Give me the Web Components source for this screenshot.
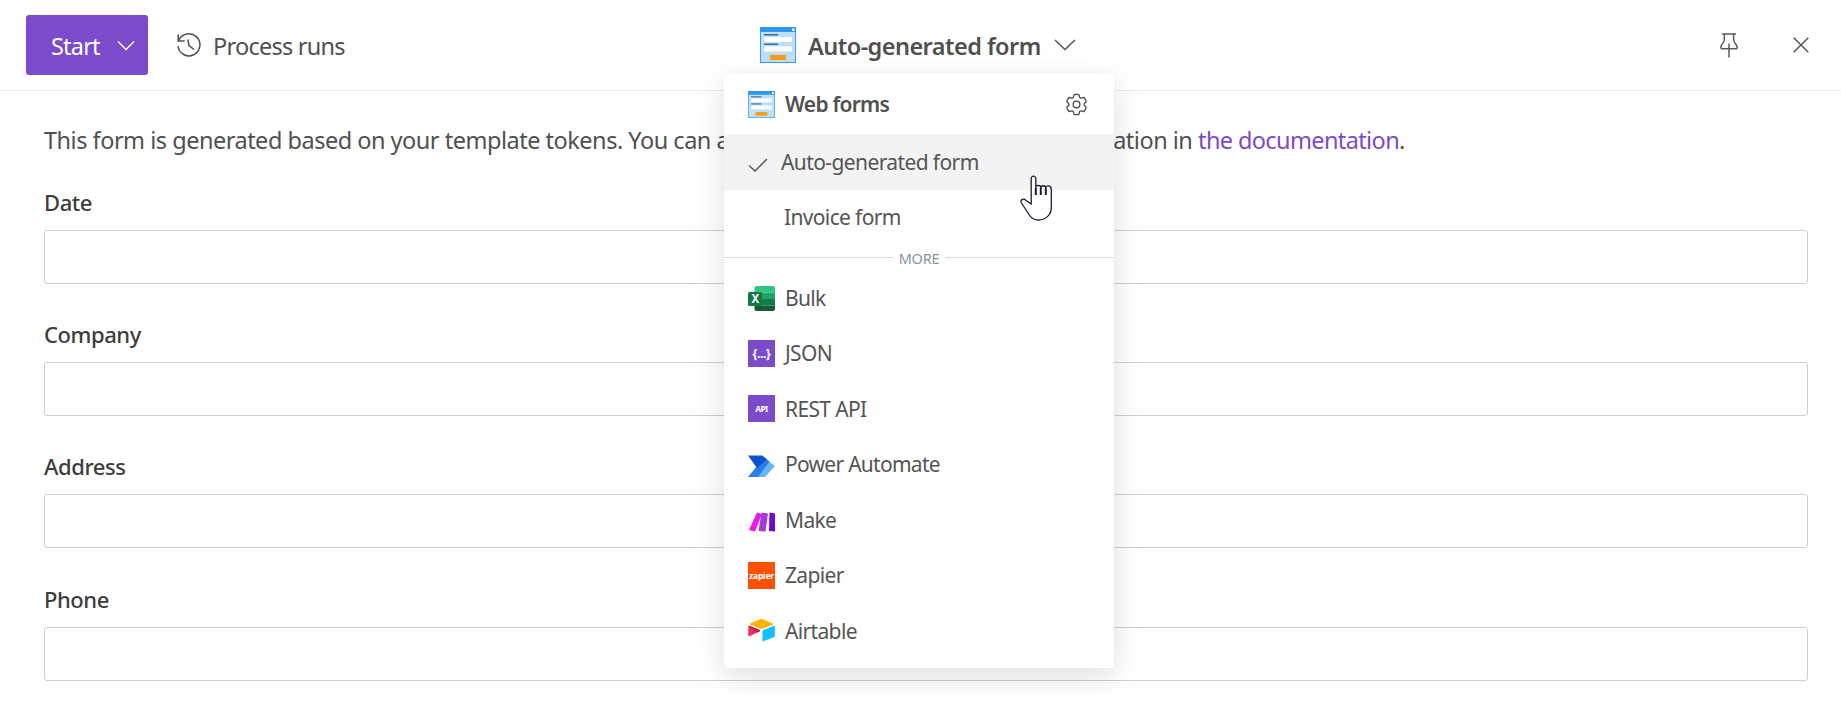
<!DOCTYPE html>
<html><head><meta charset="utf-8"><title>Form</title>
<style>
html,body{margin:0;background:#fff;height:100%;overflow:hidden}
body{font-family:"Noto Sans","Open Sans",sans-serif;color:#505050}
</style></head><body>
<flow-page>
  <top-bar slot="top"></top-bar>
  <form-intro></form-intro>
  <form-field label="Date"></form-field>
  <form-field label="Company"></form-field>
  <form-field label="Address"></form-field>
  <form-field label="Phone"></form-field>
</flow-page>
<script>
const ICONS={
 form:`<svg viewBox="0 0 36 36" width="100%" height="100%"><rect x="0.5" y="0.5" width="35" height="35" fill="#bfe0fb" stroke="#3f9df0"/><rect x="0" y="0" width="36" height="5" fill="#2f97ee"/><rect x="32" y="1.5" width="2.5" height="2.5" fill="#fff"/><rect x="4" y="7" width="14" height="1.5" fill="#3a6d96"/><rect x="4" y="10" width="28" height="5" fill="#fff"/><rect x="4" y="16.500" width="14" height="1.5" fill="#3a6d96"/><rect x="4" y="19.500" width="28" height="5" fill="#fff"/><rect x="10" y="28" width="16" height="5" fill="#f99d1c"/></svg>`,
 excel:`<svg viewBox="0 0 27 27" width="100%" height="100%" style="overflow:visible"><path d="M8.500 2h16.500a2 2 0 0 1 2 2V8.500H6.500V4a2 2 0 0 1 2-2z" fill="#33c481"/><rect x="6.500" y="8.500" width="20.500" height="6.500" fill="#21a366"/><rect x="6.500" y="15" width="20.500" height="6.500" fill="#107c41"/><path d="M6.500 21.500H27V25a2 2 0 0 1-2 2H8.500a2 2 0 0 1-2-2z" fill="#185c37"/><rect x="0" y="8" width="14" height="14" rx="1.500" fill="#0f7b40"/><text x="7" y="19.300" font-family="Noto Sans,sans-serif" font-size="11.500" font-weight="700" fill="#fff" text-anchor="middle">X</text></svg>`,
 pa:`<svg viewBox="0 0 27 27" width="100%" height="100%" style="overflow:visible"><path d="M18 8 27 15 17 26H8z" fill="#66b5ff"/><path d="M14 4.500 21.500 10.500 10 26H0L9 15z" fill="#2a7ee8"/><path d="M0 4.500H14L19 8.500 9 17z" fill="#0b53ce"/></svg>`,
 make:`<svg viewBox="0 0 27 27" width="100%" height="100%"><defs><linearGradient id="mk1" x1="0" y1="1" x2="1" y2="0"><stop offset="0" stop-color="#ff12f0"/><stop offset="1" stop-color="#d81eea"/></linearGradient></defs><path d="M1 24 9 6.500l5 1.500L7 25.500z" fill="url(#mk1)"/><path d="M13.500 6.500 20 7.500 17.500 25.500 10.500 25z" fill="#a63bd2"/><path d="M21.500 6.500 27 7.500V25.500L21 25z" fill="#7008d0"/></svg>`,
 airtable:`<svg viewBox="0 0 200 170" width="100%" height="100%"><path d="M90 2.300 16.600 32.700c-4.100 1.700-4 7.500.1 9.200L90.400 71.100c6.500 2.600 13.700 2.600 20.200 0l73.700-29.200c4.100-1.600 4.100-7.500.1-9.200L110.900 2.300C104.200-.5 96.700-.5 90 2.300z" fill="#ffb400"/><path d="M107 87v73c0 3.500 3.500 5.900 6.800 4.600l82.100-31.900c1.900-.7 3.100-2.600 3.100-4.600V55.100c0-3.500-3.500-5.900-6.800-4.600L110.100 82.400c-1.900.8-3.100 2.600-3.100 4.600z" fill="#18bfff"/><path d="M88 90.700 63.600 102.500l-2.500 1.200L9.600 128.400c-3.300 1.600-7.500-.8-7.500-4.500V55.400c0-1.300.7-2.500 1.600-3.400.4-.4.8-.7 1.200-.9 1.200-.7 3-1 4.500-.4l78.100 30.900c4 1.600 4.300 7.100.5 8.700z" fill="#f82b60"/><path d="M88 90.700 63.600 102.500 3.700 52c.4-.4.8-.7 1.200-.9 1.200-.7 3-1 4.500-.4l78.100 30.900c4 1.600 4.300 7.100.5 8.700z" fill="#b3265a"/></svg>`,
 gear:`<svg viewBox="0 0 24 24" width="100%" height="100%" fill="none" stroke="#484848" stroke-width="1.150"><path d="M9.594 3.940c.09-.542.56-.94 1.110-.94h2.593c.55 0 1.020.398 1.110.94l.213 1.281c.063.374.313.686.645.87.074.04.147.083.22.127.325.196.72.257 1.075.124l1.217-.456a1.125 1.125 0 0 1 1.370.49l1.296 2.247a1.125 1.125 0 0 1-.26 1.431l-1.003.827c-.293.241-.438.613-.43.992a7.723 7.723 0 0 1 0 .255c-.008.378.137.75.43.991l1.004.827c.424.35.534.955.26 1.430l-1.298 2.247a1.125 1.125 0 0 1-1.369.491l-1.217-.456c-.355-.133-.75-.072-1.076.124a6.470 6.470 0 0 1-.22.128c-.331.183-.581.495-.644.869l-.213 1.281c-.09.543-.56.94-1.110.94h-2.594c-.55 0-1.019-.398-1.110-.94l-.213-1.281c-.062-.374-.312-.686-.644-.87a6.520 6.520 0 0 1-.22-.127c-.325-.196-.72-.257-1.076-.124l-1.217.456a1.125 1.125 0 0 1-1.369-.49l-1.297-2.247a1.125 1.125 0 0 1 .26-1.431l1.004-.827c.292-.24.437-.613.43-.991a6.932 6.932 0 0 1 0-.255c.007-.38-.138-.751-.43-.992l-1.004-.827a1.125 1.125 0 0 1-.26-1.430l1.297-2.247a1.125 1.125 0 0 1 1.370-.491l1.216.456c.356.133.751.072 1.076-.124.072-.044.146-.086.22-.128.332-.183.582-.495.644-.869l.214-1.280Z"/><circle cx="12" cy="12" r="3"/></svg>`
};
const sq=(t,bg,fs,extra='')=>`<div style="width:100%;height:100%;background:${bg};color:#fff;display:flex;align-items:center;justify-content:center;font:700 ${fs}px 'Noto Sans',sans-serif;${extra}">${t}</div>`;
ICONS.json=sq('{...}','#7b4bcb',12,'letter-spacing:-.3px;');
ICONS.api=sq('API','#7b4bcb',8.5);
ICONS.zapier=sq('zapier','#ff4f00',8.5,'letter-spacing:-.2px;');

class BrandIcon extends HTMLElement{
  constructor(){super();this.attachShadow({mode:'open'})}
  connectedCallback(){
    const s=this.getAttribute('size')||27;
    this.shadowRoot.innerHTML=`<style>:host{display:block;width:${s}px;height:${s}px;flex:none}</style>${ICONS[this.getAttribute('name')]||''}`;
  }
}
customElements.define('brand-icon',BrandIcon);

class FlowPage extends HTMLElement{
  constructor(){super();this.attachShadow({mode:'open'}).innerHTML=`<style>
  :host{display:block}
  main{display:flex;flex-direction:column;padding:29px 33px 0 44px}
  </style><slot name="top"></slot><main><slot></slot></main>`}
}
customElements.define('flow-page',FlowPage);

class TopBar extends HTMLElement{
  constructor(){super();this.attachShadow({mode:'open'}).innerHTML=`<style>
  :host{display:flex;position:relative;height:91px;box-sizing:border-box;border-bottom:1px solid #eceded;align-items:center;padding:0 26px;font-size:23.500px;color:#505050}
  .start{display:flex;align-items:center;width:122px;height:60px;box-sizing:border-box;padding:0 13px 0 25px;background:#7b4bcb;color:#fff;border-radius:3px;justify-content:space-between}
  .start span{letter-spacing:-.8px;padding-top:1px}
  .runs{display:flex;align-items:center;margin-left:29px;gap:12px;letter-spacing:-.75px}
  .runs span{padding-top:1px}
  .mid{position:absolute;left:760px;top:27px;display:flex;align-items:center;height:36px}
  .mid b{font-weight:600;margin-left:12px;letter-spacing:-.55px;white-space:nowrap;padding-top:1px}
  .mid svg{margin-left:13px}
  .right{margin-left:auto;display:flex;align-items:center;gap:55px;padding-right:6px}
  svg{display:block;flex:none}
  </style>
  <div class="start"><span>Start</span><svg width="18" height="11" viewBox="0 0 18 11" fill="none" stroke="#fff" stroke-width="1.400"><path d="M1 1.500 9 9.500 17 1.500"/></svg></div>
  <div class="runs"><svg width="24" height="24" viewBox="0 0 24 24" fill="none" stroke="#505050" stroke-width="1.500"><path d="M1.200 1.500V8h6.500"/><path d="M1.800 7.600A11 11 0 1 1 1 13"/><path d="M10.800 6.500 12 12.500l5 4"/></svg><span>Process runs</span></div>
  <div class="mid"><brand-icon name="form" size="36"></brand-icon><b>Auto-generated form</b><svg width="22" height="12" viewBox="0 0 22 12" fill="none" stroke="#505050" stroke-width="1.400"><path d="M1 1 11 10.500 21 1"/></svg></div>
  <div class="right">
   <svg width="18" height="25" viewBox="0 0 18 25" fill="none" stroke="#5a5a5a" stroke-width="1.500"><path d="M2 1h14M4.500 1l-.3 6.500c-.2 2.500-3.400 4-3.400 6.500 0 1.300.6 1.800 1.700 1.800h13c1.100 0 1.700-.5 1.700-1.800 0-2.500-3.200-4-3.400-6.500L13.500 1M9 10.500V24.500"/></svg>
   <svg width="16" height="16" viewBox="0 0 16 16" fill="none" stroke="#505050" stroke-width="1.400"><path d="M.7.700 15.300 15.300M15.300.700.7 15.300"/></svg>
  </div>
  <flow-menu></flow-menu>`}
}
customElements.define('top-bar',TopBar);

class FormIntro extends HTMLElement{
  constructor(){super();this.attachShadow({mode:'open'}).innerHTML=`<style>
  :host{display:block;height:64px;line-height:40px;font-size:23.500px;letter-spacing:-.49px;white-space:nowrap;color:#505050}
  a{color:#7b4bcb;text-decoration:none;letter-spacing:-.62px}
  </style>This form is generated based on your template tokens. You can also extend it using the form configuration in <a href="#">the documentation</a>.`}
}
customElements.define('form-intro',FormIntro);

class FormField extends HTMLElement{
  constructor(){super();this.attachShadow({mode:'open'})}
  connectedCallback(){this.shadowRoot.innerHTML=`<style>
  :host{display:flex;flex-direction:column;height:132.200px}
  label{height:46px;display:flex;align-items:center;font-size:22px;font-weight:500;color:#3d3d3d;letter-spacing:-.43px;box-sizing:border-box;padding-bottom:10px}
  .box{height:54px;box-sizing:border-box;border:1px solid #c8d0d8;border-radius:3px;background:#fff}
  </style><label>${this.getAttribute('label')}</label><div class="box"></div>`}
}
customElements.define('form-field',FormField);

class MenuItem extends HTMLElement{
  constructor(){super();this.attachShadow({mode:'open'}).innerHTML=`<style>
  :host{display:flex;align-items:center;height:55.500px;padding:0 24px;gap:10px;font-size:21px;letter-spacing:-.65px;color:#555;box-sizing:border-box;white-space:nowrap}
  :host([active]){background:#f3f3f3}
  </style><slot name="icon"></slot><slot></slot>`}
}
customElements.define('menu-item',MenuItem);

class FlowMenu extends HTMLElement{
  constructor(){super();this.attachShadow({mode:'open'}).innerHTML=`<style>
  :host{position:absolute;left:724px;top:74px;width:390px;height:594px;box-sizing:border-box;background:#fff;border-radius:4px;box-shadow:0 8px 32px rgba(0,0,0,.13);display:flex;flex-direction:column;z-index:5}
  .head{height:60px;flex:none;display:flex;align-items:center;padding:0 24px;gap:10px;font-size:21px;font-weight:600;letter-spacing:-.75px;color:#505050}
  .head .g{margin-left:auto}
  .sep{display:flex;align-items:center;height:25px;gap:6px;font-size:14.500px;color:#8a94a0;letter-spacing:-.2px;flex:none}
  .sep i{flex:1;height:1px;background:#d6d9dc}
  .cursor{position:absolute;left:296px;top:101px;width:36px;height:46px}
  </style>
  <div class="head"><brand-icon name="form"></brand-icon><span>Web forms</span><brand-icon class="g" name="gear" size="27"></brand-icon></div>
  <menu-item active><svg slot="icon" style="display:block;width:20px;height:14px;margin-top:6px" viewBox="0 0 20 14" fill="none" stroke="#505050" stroke-width="1.300"><path d="M1 7.500 7 13 19 1"/></svg><span style="margin-left:3px;letter-spacing:-.6px">Auto-generated form</span></menu-item>
  <menu-item><span style="margin-left:36px">Invoice form</span></menu-item>
  <div class="sep"><i></i><span>MORE</span><i></i></div>
  <menu-item><brand-icon slot="icon" name="excel"></brand-icon>Bulk</menu-item>
  <menu-item><brand-icon slot="icon" name="json"></brand-icon>JSON</menu-item>
  <menu-item><brand-icon slot="icon" name="api"></brand-icon>REST API</menu-item>
  <menu-item><brand-icon slot="icon" name="pa"></brand-icon><span style="letter-spacing:-.72px">Power Automate</span></menu-item>
  <menu-item><brand-icon slot="icon" name="make"></brand-icon>Make</menu-item>
  <menu-item><brand-icon slot="icon" name="zapier"></brand-icon>Zapier</menu-item>
  <menu-item><brand-icon slot="icon" name="airtable"></brand-icon>Airtable</menu-item>
  <svg class="cursor" viewBox="0 0 35 46" fill="#fff" stroke="#1a1c33" stroke-width="1.300"><path d="M10.700 29V3.500a2.300 2.300 0 0 1 4.600 0V13c0-3.500 5-3.500 5 0 0-3 5-3 5 0 0-3 5.500-3 5.500 1.500V33c0 7-6 12-13 12-5 0-7-2-9-5L1 28c-2-3 2-5 4-3z"/><path d="M15.300 13v7M20.300 13v7M25.300 13v7" stroke-width="2" fill="none"/></svg>`}
}
customElements.define('flow-menu',FlowMenu);
</script>
</body></html>
